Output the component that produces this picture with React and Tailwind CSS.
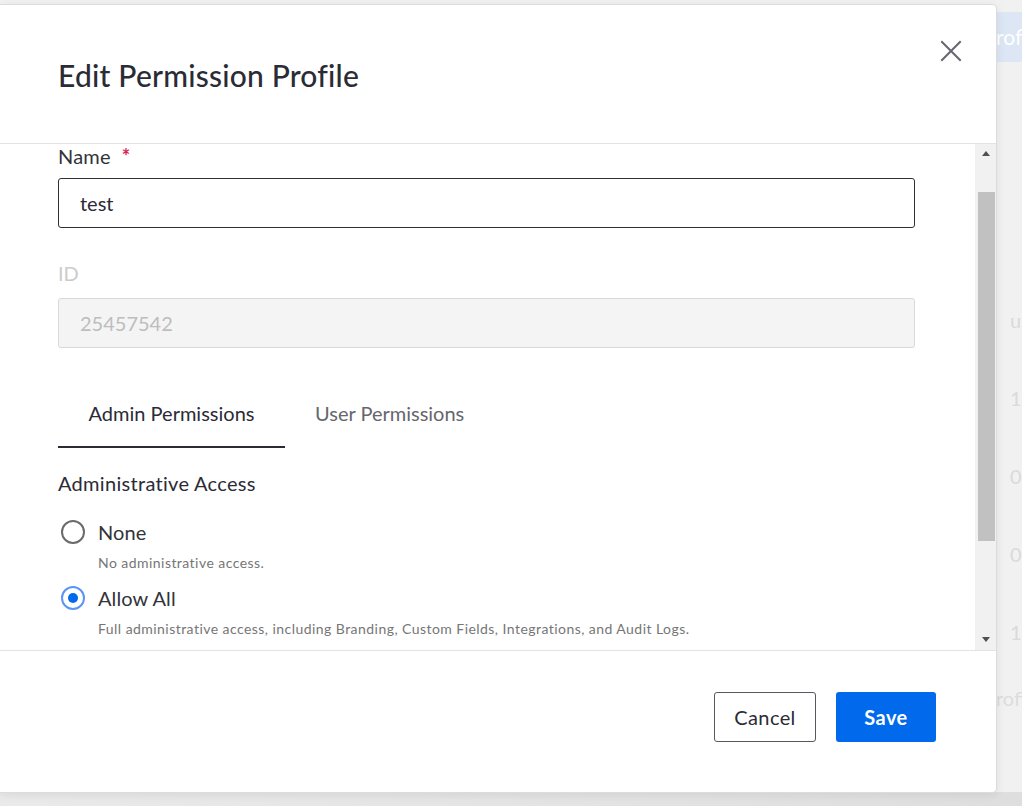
import { useState } from 'react';

const FONT = { fontFamily: 'Lato, "Open Sans", "Liberation Sans", sans-serif' };

function CloseIcon() {
  return (
    <svg width="24" height="24" viewBox="0 0 24 24" fill="none" stroke="#666670" strokeWidth="2" strokeLinecap="square">
      <path d="M3 3 L21 21 M21 3 L3 21" />
    </svg>
  );
}

function Radio({ checked }) {
  if (checked) {
    return (
      <span className="flex h-[24px] w-[24px] items-center justify-center rounded-full border-2 border-[#5a95f5] bg-white">
        <span className="h-[10px] w-[10px] rounded-full bg-[#0069ec]" />
      </span>
    );
  }
  return <span className="block h-[24px] w-[24px] rounded-full border-2 border-[#6b6b6b] bg-white" />;
}

function RadioOption({ label, description, checked }) {
  return (
    <div>
      <div className="flex h-[24px] items-center gap-[13px] pl-[3px]">
        <Radio checked={checked} />
        <span className="text-[20px] tracking-[0.1px] text-[#33333a]">{label}</span>
      </div>
      <div className="mt-[11px] pl-[40px] text-[14px] leading-[16px] tracking-[0.45px] text-[#767676]">{description}</div>
    </div>
  );
}

function FakeScrollbar() {
  return (
    <div className="flex w-[21px] flex-col items-center bg-[#f1f1f1] pl-[1px]">
      <div className="flex h-[18px] w-full items-center justify-center">
        <span className="h-0 w-0 border-x-[4px] border-b-[5px] border-x-transparent border-b-[#505050]" />
      </div>
      <div className="mt-[30px] h-[349px] w-[17px] bg-[#c1c1c1]" />
      <div className="flex-1" />
      <div className="flex h-[18px] w-full items-center justify-center pb-[4px]">
        <span className="h-0 w-0 border-x-[4px] border-t-[5px] border-x-transparent border-t-[#505050]" />
      </div>
    </div>
  );
}

export default function App() {
  const [tab, setTab] = useState('admin');

  return (
    <div className="relative h-[806px] w-[1022px] overflow-hidden bg-[#f1f1f1]" style={FONT}>
      {/* faded page behind the dialog */}
      <div className="absolute left-[994px] top-[12px] flex h-[50px] w-[40px] items-center bg-[#dce6f4] pl-[2px] text-[21px] text-white">
        rofi
      </div>
      <div className="absolute left-[1010px] top-[305px] flex flex-col gap-[48px] text-[20px] text-[#dadada]">
        <span>u</span>
        <span>1</span>
        <span>0</span>
        <span>0</span>
        <span>1</span>
      </div>
      <div className="absolute left-[996px] top-[683px] text-[20px] text-[#dcdcdc]">rofi</div>
      <div className="absolute inset-x-0 bottom-0 h-[14px] bg-gradient-to-r from-[#eaeaea] to-[#dedede]" />

      {/* dialog */}
      <div className="absolute left-0 top-[4px] flex h-[789px] w-[997px] flex-col rounded-r-[5px] border border-l-0 border-[#dcdcdc] bg-white shadow-[0_2px_10px_rgba(0,0,0,0.08)]">
        <div className="flex h-[139px] items-start justify-between border-b border-[#e3e3e3] pl-[58px] pr-[33px]">
          <h1 className="mt-[52px] text-[30px] font-medium leading-[36px] tracking-[0.2px] text-[#2b2b36]">
            Edit Permission Profile
          </h1>
          <button className="mt-[34px]">
            <CloseIcon />
          </button>
        </div>

        <div className="flex h-[507px] border-b border-[#e3e3e3]">
          <div className="flex-1 overflow-hidden pl-[58px] pr-[60px] pt-[1px]">
            <div className="flex items-center text-[20px] leading-[22px] tracking-[0.2px] text-[#33333a]">
              <span>Name</span>
              <span className="ml-[11px] text-[20px] font-bold leading-[20px] text-[#d9245a]">*</span>
            </div>
            <div className="mt-[11px] flex h-[50px] items-center rounded-[3px] border border-[#2f2f36] px-[21px] text-[20px] text-[#2b2b36]">
              test
            </div>

            <div className="mt-[34px] text-[20px] leading-[22px] text-[#cccccc]">ID</div>
            <div className="mt-[14px] flex h-[50px] items-center rounded-[3px] border border-[#d9d9d9] bg-[#f4f4f4] px-[21px] text-[20px] text-[#bdbdbd]">
              25457542
            </div>

            <div className="mt-[32px] flex">
              <button
                onClick={() => setTab('admin')}
                className={`h-[68px] w-[227px] border-b-2 text-[20px] ${tab === 'admin' ? 'border-[#2b2b36] text-[#2b2b36]' : 'border-transparent text-[#66666d]'}`}
              >
                Admin Permissions
              </button>
              <button
                onClick={() => setTab('user')}
                className={`h-[68px] border-b-2 px-[30px] text-[20px] ${tab === 'user' ? 'border-[#2b2b36] text-[#2b2b36]' : 'border-transparent text-[#66666d]'}`}
              >
                User Permissions
              </button>
            </div>

            <div className="mt-[24px] text-[20px] leading-[22px] tracking-[0.3px] text-[#2b2b36]">Administrative Access</div>

            <div className="mt-[26px] flex flex-col gap-[15px]">
              <RadioOption label="None" description="No administrative access." />
              <RadioOption
                label="Allow All"
                checked
                description="Full administrative access, including Branding, Custom Fields, Integrations, and Audit Logs."
              />
            </div>
          </div>
          <FakeScrollbar />
        </div>

        <div className="flex flex-1 items-start justify-end gap-[20px] pr-[60px] pt-[41px]">
          <button className="h-[50px] w-[102px] rounded-[3px] border border-[#58585e] text-[20px] tracking-[0.4px] text-[#2b2b36]">
            Cancel
          </button>
          <button className="h-[50px] w-[100px] rounded-[3px] bg-[#0069ec] text-[20px] font-bold tracking-[0.4px] text-white">
            Save
          </button>
        </div>
      </div>
    </div>
  );
}
